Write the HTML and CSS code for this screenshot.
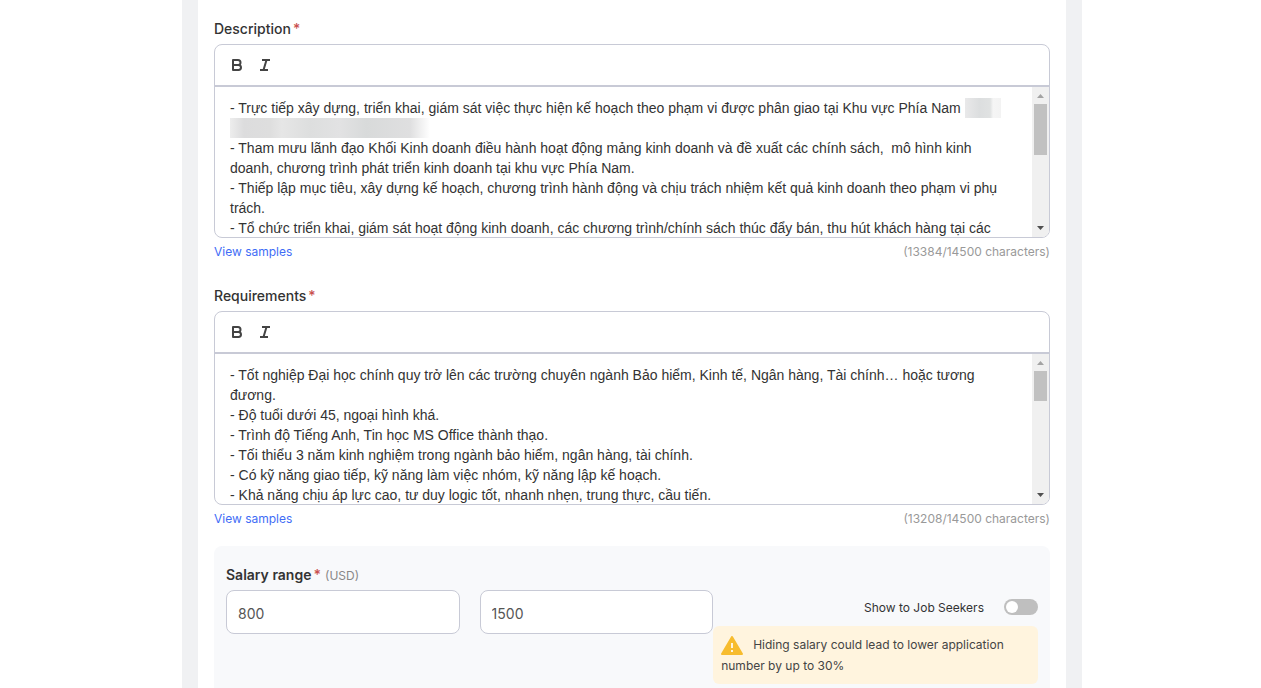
FILE: index.html
```html
<!DOCTYPE html>
<html lang="en">
<head>
<meta charset="utf-8">
<title>Job posting</title>
<link rel="stylesheet" href="styles.css">
</head>
<body>
<svg class="defs" aria-hidden="true">
  <symbol id="bold" viewBox="0 0 18 18"><path d="M5 4h5a2.500 2.500 0 0 1 0 5H5zM5 9h5.500a2.500 2.500 0 0 1 0 5H5z" fill="none" stroke="currentColor" stroke-width="2" stroke-linejoin="round"/></symbol>
  <symbol id="italic" viewBox="0 0 18 18"><path d="M6 4h8M4 14h8M10.500 4 7.500 14" fill="none" stroke="currentColor" stroke-width="2"/></symbol>
  <symbol id="up" viewBox="0 0 17 17"><path d="M5 11h7L8.500 7z" fill="#a3a3a3"/></symbol>
  <symbol id="down" viewBox="0 0 17 17"><path d="M5 6h7L8.500 10z" fill="#505050"/></symbol>
</svg>
<main class="page">
  <form class="form">
    <section class="field">
      <div class="label" id="desc-label">Description<span class="required">*</span></div>
      <div class="editor">
        <div class="toolbar">
          <button type="button" class="tool" aria-label="Bold"><svg><use href="#bold"/></svg></button>
          <button type="button" class="tool" aria-label="Italic"><svg><use href="#italic"/></svg></button>
        </div>
        <div class="editor-body">
          <div class="editor-text" contenteditable="true" spellcheck="false" role="textbox" aria-multiline="true" aria-labelledby="desc-label">
            <p>- Trực tiếp xây dựng, triển khai, giám sát việc thực hiện kế hoạch theo phạm vi được phân giao tại Khu vực Phía Nam <span class="redacted redacted-short"></span><br><span class="redacted redacted-long"></span></p>
            <p>- Tham mưu lãnh đạo Khối Kinh doanh điều hành hoạt động mảng kinh doanh và đề xuất các chính sách,&nbsp; mô hình kinh doanh, chương trình phát triển kinh doanh tại khu vực Phía Nam.</p>
            <p>- Thiếp lập mục tiêu, xây dựng kế hoạch, chương trình hành động và chịu trách nhiệm kết quả kinh doanh theo phạm vi phụ trách.</p>
            <p>- Tổ chức triển khai, giám sát hoạt động kinh doanh, các chương trình/chính sách thúc đẩy bán, thu hút khách hàng tại các</p>
          </div>
          <div class="scrollbar" aria-hidden="true">
            <svg class="arrow"><use href="#up"/></svg>
            <div class="track"><div class="thumb thumb-desc"></div></div>
            <svg class="arrow"><use href="#down"/></svg>
          </div>
        </div>
      </div>
      <div class="field-foot"><a class="samples" href="#">View samples</a><span class="count">(13384/14500 characters)</span></div>
    </section>

    <section class="field">
      <div class="label" id="req-label">Requirements<span class="required">*</span></div>
      <div class="editor">
        <div class="toolbar">
          <button type="button" class="tool" aria-label="Bold"><svg><use href="#bold"/></svg></button>
          <button type="button" class="tool" aria-label="Italic"><svg><use href="#italic"/></svg></button>
        </div>
        <div class="editor-body">
          <div class="editor-text" contenteditable="true" spellcheck="false" role="textbox" aria-multiline="true" aria-labelledby="req-label">
            <p>- Tốt nghiệp Đại học chính quy trở lên các trường chuyên ngành Bảo hiểm, Kinh tế, Ngân hàng, Tài chính… hoặc tương đương.</p>
            <p>- Độ tuổi dưới 45, ngoại hình khá.</p>
            <p>- Trình độ Tiếng Anh, Tin học MS Office thành thạo.</p>
            <p>- Tối thiểu 3 năm kinh nghiệm trong ngành bảo hiểm, ngân hàng, tài chính.</p>
            <p>- Có kỹ năng giao tiếp, kỹ năng làm việc nhóm, kỹ năng lập kế hoạch.</p>
            <p>- Khả năng chịu áp lực cao, tư duy logic tốt, nhanh nhẹn, trung thực, cầu tiến.</p>
          </div>
          <div class="scrollbar" aria-hidden="true">
            <svg class="arrow"><use href="#up"/></svg>
            <div class="track"><div class="thumb thumb-req"></div></div>
            <svg class="arrow"><use href="#down"/></svg>
          </div>
        </div>
      </div>
      <div class="field-foot"><a class="samples" href="#">View samples</a><span class="count">(13208/14500 characters)</span></div>
    </section>

    <section class="salary">
      <label class="label salary-label" for="salary-from">Salary range<span class="required">*</span><span class="unit">(USD)</span></label>
      <div class="salary-row">
        <div class="range">
          <input class="amount" id="salary-from" type="text" value="800">
          <input class="amount" type="text" value="1500" aria-label="Salary range, maximum">
        </div>
        <div class="visibility">
          <label class="switch-row">Show to Job Seekers<input class="switch" type="checkbox" role="switch"></label>
          <p class="warning"><svg class="warning-icon" viewBox="0 0 22 19" aria-hidden="true"><path d="M11 1 21 18H1z" fill="#f7bc2e" stroke="#f7bc2e" stroke-width="2" stroke-linejoin="round"/><path d="M10 7h2v5h-2zM10 14h2v2h-2z" fill="#fff4de"/></svg>Hiding salary could lead to lower application number by up to 30%</p>
        </div>
      </div>
    </section>
  </form>
</main>
</body>
</html>
```
FILE: styles.css
```css
* { box-sizing: border-box; }

body {
  margin: 0;
  padding-left: 3px;
  background: #fff;
  color: #333;
  font-family: Inter, "Liberation Sans", sans-serif;
  font-size: 14px;
  overflow: hidden;
}

p { margin: 0; }

.defs { display: none; }

.page {
  max-width: 900px;
  height: 100vh;
  margin: 0 auto;
  padding: 0 16px;
  background: #f0f1f3;
}

.form {
  min-height: 100vh;
  padding: 19px 16px 0;
  background: #fff;
}

.field + .field { margin-top: 24px; }

.label {
  display: block;
  margin-bottom: 5px;
  font-weight: 500;
  line-height: 20px;
}

.required {
  margin-left: 2px;
  color: #c9504f;
}

.editor {
  border: 1px solid #c8cad6;
  border-radius: 8px;
  overflow: hidden;
}

.toolbar {
  display: flex;
  height: 42px;
  padding: 8px;
  border-bottom: 2px solid #c8cad6;
}

.tool {
  width: 28px;
  height: 24px;
  padding: 3px 5px;
  border: 0;
  background: none;
  color: #444;
}

.tool svg {
  display: block;
  width: 18px;
  height: 18px;
}

.editor-body {
  display: flex;
  height: 150px;
}

.editor-text {
  flex: 1;
  padding: 11px 15px;
  overflow: hidden;
  outline: 0;
  font-family: "Liberation Sans", Arial, sans-serif;
  line-height: 20px;
}

.redacted {
  display: inline-block;
  height: 20px;
  vertical-align: top;
}

.redacted-short {
  width: 36px;
  background: linear-gradient(90deg, #e9e9ea, #dcdedf 40%, #e0e2e2 70%, #f5f5f5 78%, #f3f3f3);
}

.redacted-long {
  width: 200px;
  background: linear-gradient(90deg, #ededed, #dcdcdd 7%, #dedede 20%, #e6e6e6 26%, #dddede 40%, #e2e2e3 55%, #d8dada 68%, #dfdfe0 90%, #fff);
}

.scrollbar {
  display: flex;
  flex-direction: column;
  width: 17px;
  background: #f0f0f0;
}

.arrow {
  display: block;
  width: 17px;
  height: 17px;
}

.track {
  flex: 1;
  padding: 0 2px;
}

.thumb { background: #c1c1c1; }
.thumb-desc { height: 51px; }
.thumb-req { height: 30px; }

.field-foot {
  display: flex;
  justify-content: space-between;
  padding-top: 4px;
  font-size: 12px;
  line-height: 20px;
}

.samples {
  color: #3f6df6;
  text-decoration: none;
}

.count { color: #999; }

.salary {
  min-height: 160px;
  margin-top: 17px;
  padding: 19px 12px 12px;
  border-radius: 8px;
  background: #f8f9fb;
}

.salary-label {
  margin-bottom: 4px;
  font-weight: 600;
}

.unit {
  margin-left: 4px;
  color: #888;
  font-size: 12px;
  font-weight: 400;
}

.salary-row {
  display: grid;
  grid-template-columns: 3fr 2fr;
}

.range {
  display: grid;
  grid-template-columns: 1fr 1fr;
  gap: 20px;
  align-items: start;
}

.amount {
  width: 100%;
  height: 44px;
  padding: 2px 11px 0;
  border: 1px solid #c8cad6;
  border-radius: 8px;
  background: #fff;
  color: #555;
  font: inherit;
}

.switch-row {
  display: flex;
  justify-content: flex-end;
  align-items: center;
  gap: 20px;
  height: 34px;
  margin-bottom: 2px;
  font-size: 12px;
}

.switch {
  appearance: none;
  width: 34px;
  height: 16px;
  margin: 0;
  padding: 2px;
  border-radius: 8px;
  background: #bfbfbf;
}

.switch::before {
  content: "";
  display: block;
  width: 12px;
  height: 12px;
  border-radius: 50%;
  background: #fff;
}

.warning {
  padding: 8px;
  border-radius: 6px;
  background: #fff4de;
  color: #444;
  font-size: 12px;
  line-height: 21px;
}

.warning-icon {
  width: 22px;
  height: 19px;
  margin-right: 10px;
  vertical-align: middle;
}
```
